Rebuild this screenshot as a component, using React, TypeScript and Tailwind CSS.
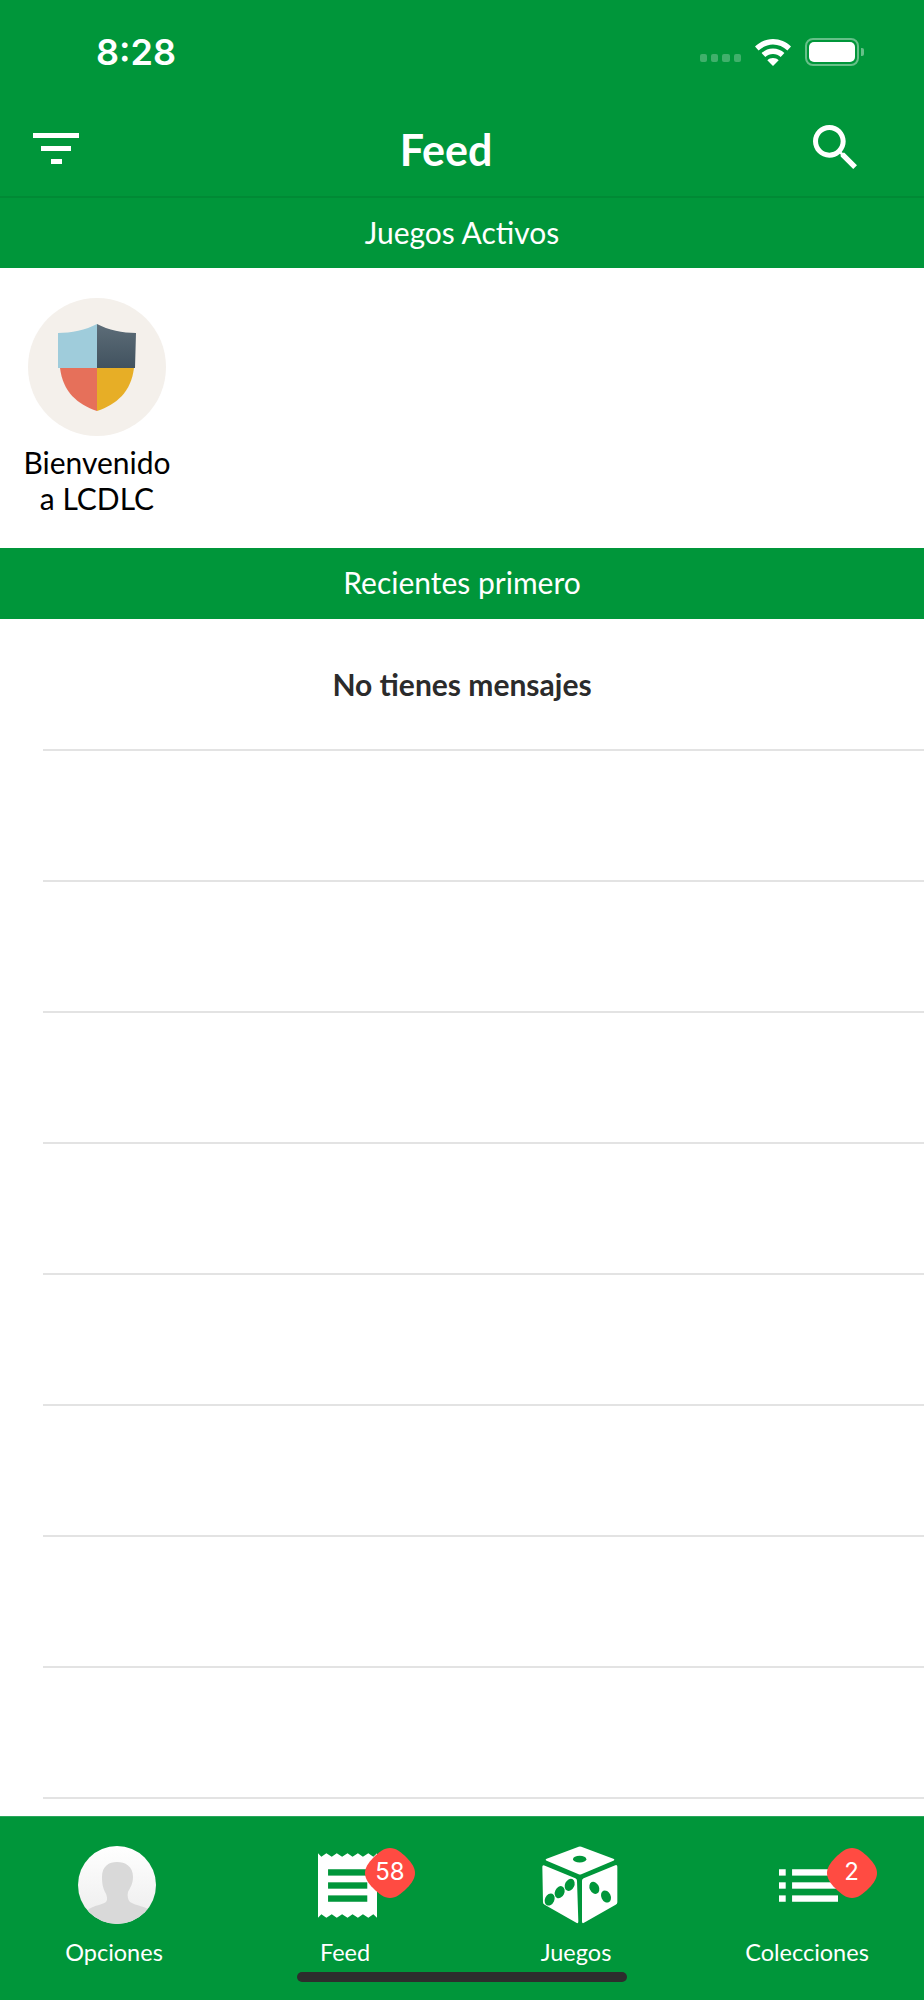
import React from "react";

const font = { fontFamily: "Lato, 'Noto Sans', sans-serif" };

function Wifi() {
  return (
    <svg width="36" height="27" viewBox="0 0 36 27" fill="white">
      <path d="M18 0C11 0 5 2.8 0 7.4l3.6 4C7.7 7.7 12.600 5.400 18 5.400s10.300 2.300 14.400 6l3.600-4C31 2.800 25 0 18 0z" />
      <path d="M18 9.500c-4.400 0-8.300 1.700-11.400 4.500l3.700 4.100c2.100-1.900 4.800-3.100 7.700-3.100s5.600 1.200 7.700 3.100l3.700-4.100c-3.100-2.800-7-4.500-11.400-4.500z" />
      <path d="M18 19c-2.200 0-4.200.8-5.700 2.200L18 27l5.700-5.800C22.200 19.800 20.200 19 18 19z" />
    </svg>
  );
}

function Battery() {
  return (
    <div className="flex items-center gap-[2px]">
      <div className="w-[54px] h-[28px] rounded-[8px] border-2 border-white/40 p-[2px]">
        <div className="w-full h-full rounded-[5px] bg-white" />
      </div>
      <div className="w-[3px] h-[8px] rounded-r-[2px] bg-white/40" />
    </div>
  );
}

function StatusBar() {
  return (
    <div className="h-[108px] flex items-start justify-between pl-[96px] pr-[60px] pt-[38px]">
      <span className="text-white text-[36px] leading-[28px] font-semibold" style={{ fontFamily: "Inter, sans-serif" }}>8:28</span>
      <div className="flex items-center">
        <div className="flex gap-[4px] mt-[12px] mr-[14px]">
          <div className="w-[7px] h-[8px] rounded-[2px] bg-white/25" />
          <div className="w-[7px] h-[8px] rounded-[2px] bg-white/25" />
          <div className="w-[8px] h-[8px] rounded-[2px] bg-white/25" />
          <div className="w-[7px] h-[8px] rounded-[2px] bg-white/25" />
        </div>
        <div className="mr-[14px] mt-[1px]"><Wifi /></div>
        <Battery />
      </div>
    </div>
  );
}

function FilterIcon() {
  return (
    <svg width="46" height="32" viewBox="0 0 46 32" fill="white">
      <rect x="0" y="0" width="46" height="5" />
      <rect x="8" y="13" width="30" height="5" />
      <rect x="18" y="26" width="11" height="5" />
    </svg>
  );
}

function SearchIcon() {
  return (
    <svg width="44" height="44" viewBox="3 3 17.500 17.500" fill="white">
      <path d="M15.500 14h-.79l-.28-.27C15.410 12.590 16 11.110 16 9.500 16 5.910 13.090 3 9.500 3S3 5.910 3 9.500 5.910 16 9.500 16c1.610 0 3.090-.59 4.230-1.570l.27.28v.79l5 4.990L20.490 19l-4.990-5zm-6 0C7.010 14 5 11.990 5 9.500S7.010 5 9.500 5 14 7.010 14 9.500 11.990 14 9.500 14z" />
    </svg>
  );
}

function Shield() {
  return (
    <svg width="80" height="88" viewBox="0 0 80 88" className="mt-[1px]">
      <defs>
        <linearGradient id="sb" x1="0" y1="0" x2="0" y2="1">
          <stop offset="0" stopColor="#5d6d78" />
          <stop offset="1" stopColor="#41525f" />
        </linearGradient>
      </defs>
      <path d="M40 0C29 6 14 9 1 9L1 44L40 44Z" fill="#9fccdb" />
      <path d="M40 0C51 6 66 9 79 9L78 44L40 44Z" fill="url(#sb)" />
      <path d="M3 44L40 44L40 87C20 80 6 68 3 44Z" fill="#e6705a" />
      <path d="M77 44L40 44L40 87C60 80 74 68 77 44Z" fill="#e7ae26" />
    </svg>
  );
}

function Band({ children, className }: { children: React.ReactNode; className: string }) {
  return (
    <div className={"bg-[#00963a] flex items-center justify-center text-white text-[30px] " + className}>
      {children}
    </div>
  );
}

function Badge({ text }: { text: string }) {
  return (
    <div className="absolute left-[57px] top-[2px] w-[50px] h-[50px] flex items-center justify-center">
      <svg className="absolute inset-0" width="50" height="50" viewBox="0 0 50 50">
        <path d="M25 0C31 0 36 4 42 10C47 15 50 20 50 25C50 30 47 35 42 40C36 46 31 50 25 50C19 50 14 46 8 40C3 35 0 30 0 25C0 20 3 15 8 10C14 4 19 0 25 0Z" fill="#ff4b42" />
      </svg>
      <span className="relative text-white text-[24px] leading-none -mt-[3px]" style={{ fontFamily: "Inter, sans-serif" }}>{text}</span>
    </div>
  );
}

function Avatar() {
  return (
    <svg width="78" height="78" viewBox="0 0 78 78">
      <defs>
        <linearGradient id="av" x1="0" y1="0" x2="0" y2="1">
          <stop offset="0" stopColor="#ffffff" />
          <stop offset="1" stopColor="#ececec" />
        </linearGradient>
        <clipPath id="avc"><circle cx="39" cy="39" r="39" /></clipPath>
      </defs>
      <circle cx="39" cy="39" r="39" fill="url(#av)" />
      <path clipPath="url(#avc)" d="M39 16C47 16 55 20 55 31C55 38 52 42 50 46C49 50 50 54 52 56C58 60 68 60 72 65L78 78L0 78L11 63C17 59 24 59 28 56C30 54 29 49 27 46C25 42 24 38 24 31C24 20 31 16 39 16Z" fill="#d9d9d9" />
    </svg>
  );
}

function Receipt() {
  return (
    <svg width="59" height="65" viewBox="0 0 176 193">
      <path fillRule="evenodd" fill="white" d="M0 0L10 11L25 0L41 11L56 0L72 11L88 0L103 11L119 0L134 11L150 0L165 11L176 0L176 193L165 182L150 193L134 182L119 193L103 182L88 193L72 182L56 193L41 182L25 193L10 182L0 193Z" />
      <rect x="30" y="48" width="117" height="19" fill="#00963a" />
      <rect x="30" y="87" width="117" height="19" fill="#00963a" />
      <rect x="30" y="126" width="117" height="19" fill="#00963a" />
    </svg>
  );
}

function Dice() {
  return (
    <svg width="76" height="78" viewBox="240 140 228 233" fill="white">
      <path d="M350 142Q354 140 358 142L454 178Q460 181 454 184L358 224Q354 226 350 224L254 184Q248 181 254 178Z" />
      <path d="M247 198L340 236Q345 238 345 244L349 366Q349 373 343 370L248 316Q243 313 243 308L241 202Q241 196 247 198Z" />
      <path d="M460 197L365 236Q360 238 360 244L360 366Q360 373 366 370L461 316Q466 313 466 308L466 202Q466 195 460 197Z" />
      <g fill="#00963a">
        <ellipse cx="353" cy="179" rx="20" ry="10" />
        <ellipse cx="263" cy="300" rx="14" ry="19" transform="rotate(25 263 300)" />
        <ellipse cx="293" cy="278" rx="14" ry="19" transform="rotate(25 293 278)" />
        <ellipse cx="323" cy="256" rx="14" ry="19" transform="rotate(25 323 256)" />
        <ellipse cx="397" cy="265" rx="14" ry="19" transform="rotate(-25 397 265)" />
        <ellipse cx="432" cy="291" rx="14" ry="19" transform="rotate(-25 432 291)" />
      </g>
    </svg>
  );
}

function ListIcon() {
  return (
    <svg width="59" height="33" viewBox="0 0 176 97" fill="white">
      <rect x="0" y="0" width="20" height="19" />
      <rect x="0" y="39" width="20" height="19" />
      <rect x="0" y="78" width="20" height="19" />
      <rect x="39" y="0" width="137" height="19" />
      <rect x="39" y="39" width="137" height="19" />
      <rect x="39" y="78" width="137" height="19" />
    </svg>
  );
}

function Tab({ label, icon, badge, iconClass }: { label: string; icon: React.ReactNode; badge?: string; iconClass: string }) {
  return (
    <div className="flex flex-col items-center">
      <div className={"relative w-[78px] h-[78px] flex items-center justify-center " + iconClass}>
        {icon}
        {badge ? <Badge text={badge} /> : null}
      </div>
      <span className="text-white text-[23.500px] leading-[30px] mt-[13px] -ml-[3px]">{label}</span>
    </div>
  );
}

const rows = [0, 1, 2, 3, 4, 5, 6, 7];

export default function App() {
  return (
    <div className="relative w-[924px] h-[2000px] overflow-hidden bg-white flex flex-col" style={font}>
      <div className="bg-[#00963a] border-b-2 border-[#008a35]">
        <StatusBar />
        <div className="h-[88px] relative flex items-center justify-between pl-[33px] pr-[67px] pb-[6px]">
          <FilterIcon />
          <span className="text-white text-[43px] font-bold leading-none">Feed</span>
          <div className="-mt-[5px]"><SearchIcon /></div>
        </div>
      </div>
      <Band className="h-[70px] pb-[2px]">Juegos Activos</Band>
      <div className="h-[280px] pt-[30px] bg-white">
        <div className="w-[194px] flex flex-col items-center">
          <div className="w-[138px] h-[138px] rounded-full bg-[#f4f0eb] flex items-center justify-center">
            <Shield />
          </div>
          <div className="mt-[8px] text-center text-black text-[30px] leading-[36px]">
            Bienvenido
            <br />a LCDLC
          </div>
        </div>
      </div>
      <Band className="h-[71px] pb-[2px]">Recientes primero</Band>
      <div className="flex-1 bg-white overflow-hidden pt-[1px]">
        <div className="h-[131px] border-b-2 border-[#e3e3e3] ml-[43px] relative flex items-center justify-center">
          <span className="-ml-[43px] text-[#2b2b2b] text-[30px] font-bold">No tienes mensajes</span>
        </div>
        {rows.map((r) => (
          <div key={r} className="h-[131px] border-b-2 border-[#e3e3e3] ml-[43px]" />
        ))}
      </div>
      <div className="h-[184px] bg-[#00963a] border-t border-[#2ba65c] grid grid-cols-4 pt-[29px]">
        <Tab label="Opciones" icon={<Avatar />} iconClass="ml-[2px]" />
        <Tab label="Feed" icon={<Receipt />} badge="58" iconClass="ml-[1px]" />
        <Tab label="Juegos" icon={<Dice />} iconClass="ml-[5px]" />
        <Tab label="Colecciones" icon={<ListIcon />} badge="2" iconClass="" />
      </div>
      <div className="absolute left-[297px] top-[1972px] w-[330px] h-[10px] rounded-full bg-[#2d2d2d]" />
    </div>
  );
}
